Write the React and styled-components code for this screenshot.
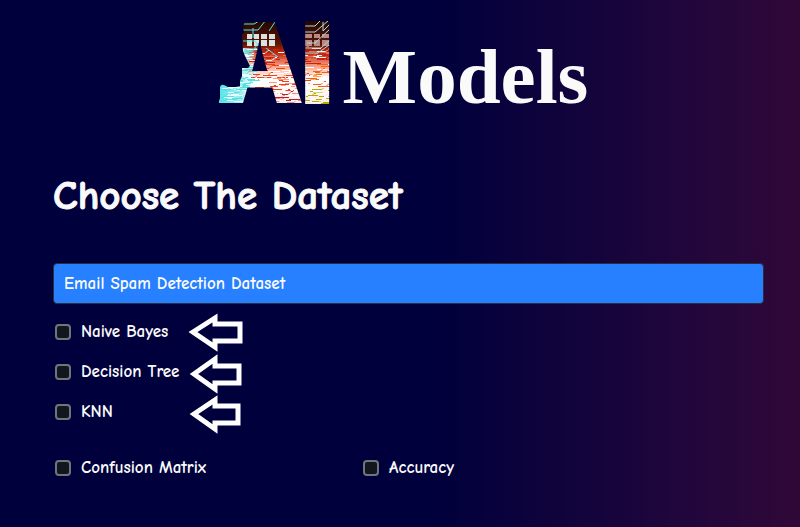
import React from "react";
import styled, { createGlobalStyle } from "styled-components";

const GlobalStyle = createGlobalStyle`
  * { box-sizing: border-box; }
  html { min-height: 100%; background: linear-gradient(90deg, #00003c 0%, #00003c 54%, #15043c 75%, #25073b 90%, #300838 100%); }
  body {
    margin: 0;
    color: #fafafa;
    font-family: "Comic Neue", "Comic Sans MS", "Open Sans", sans-serif;
    font-size: 17px;
    line-height: 24px;
  }
`;

const Page = styled.main`
  padding: 20px 36px 40px 53px;
`;

const Brand = styled.header`
  display: flex;
  justify-content: center;
  align-items: flex-start;
  gap: 8px;
  padding-right: 10px;
  height: 84px;
`;

const LogoArt = styled.svg`
  flex: none;
  width: 116px;
  height: 84px;
`;

const LogoLetters = styled.text`
  font-family: Inter, "Liberation Sans", sans-serif;
  font-size: 111px;
  font-weight: 900;
`;

const BrandName = styled.h1`
  margin: 13px 0 0;
  font: bold 79px/88px "Liberation Serif", "Times New Roman", serif;
`;

const Title = styled.h2`
  margin: 64px 0 40px;
  font-size: 41px;
  font-weight: 700;
  line-height: 55px;
  -webkit-text-stroke: 1px currentColor;
`;

const DatasetSelect = styled.select`
  display: block;
  appearance: none;
  width: 100%;
  height: 41px;
  padding: 0 10px;
  border: 1px solid #2b3038;
  border-radius: 4px;
  background: #2680ff;
  color: #fafafa;
  font: inherit;
  font-weight: 700;
`;

const Models = styled.fieldset`
  margin: 8px 0 0;
  padding: 0;
  border: 0;
`;

const Row = styled.div`
  display: flex;
  align-items: center;
  height: 40px;
`;

const Metrics = styled.fieldset`
  display: grid;
  grid-template-columns: 13fr 17fr;
  margin: 16px 0 0;
  padding: 0;
  border: 0;
`;

const Choice = styled.label`
  display: flex;
  align-items: center;
  gap: 10px;
  width: 136px;
  padding-left: 2px;
  font-weight: 700;
  white-space: nowrap;
`;

const Box = styled.input`
  appearance: none;
  flex: none;
  width: 16px;
  height: 16px;
  margin: 0;
  border: 2px solid #70757a;
  border-radius: 4px;
  background: #12171f;
  &:checked { background: #2680ff; }
`;

const Arrow = styled.svg`
  flex: none;
  width: 56px;
  height: 40px;
  overflow: visible;
`;

const arrows = {
  naive: "M4 20 L26 6 V12 H51 V29 H26 V35 Z",
  tree: "M5 22 L26 7 V14 H50 V31 H26 V37 Z",
  knn: "M5 22 L26 8 V14 H49 V31 H26 V37 Z",
};

function traceColor(x, y, pick) {
  if (x < 30) return pick < 0.5 ? "#55e0e6" : "#e4ffff";
  if (y < 44) return pick < 0.45 ? "#c9230c" : pick < 0.7 ? "#f2f6ff" : "#e07058";
  if (x > 84 && y > 66) return pick < 0.45 ? "#b5a800" : pick < 0.6 ? "#d4d860" : "#ffffff";
  if (x > 84) return pick < 0.35 ? "#f4601c" : pick < 0.5 ? "#ffa760" : "#ffffff";
  if (y > 72) return pick < 0.4 ? "#b02030" : pick < 0.6 ? "#e88a90" : "#ffffff";
  return pick < 0.35 ? "#e8421c" : pick < 0.5 ? "#ff9878" : "#ffffff";
}

// Repeatable pseudo-random traces for the circuit-board fill.
function circuitTraces(count) {
  let seed = 17;
  const next = () => {
    seed = (seed * 16807) % 2147483647;
    return seed / 2147483647;
  };
  return Array.from({ length: count }, (_, i) => {
    const x = Math.round(next() * 114);
    const y = 28 + Math.round(next() * 55);
    const w = 3 + Math.round(next() * 7);
    const bend = next() > 0.65 ? 3 : 0;
    return (
      <path
        key={i}
        d={`M${x} ${y + 0.5}h${w}l${bend} ${-bend}h2`}
        stroke={traceColor(x, y, next())}
      />
    );
  });
}

function Logo() {
  return (
    <LogoArt viewBox="0 0 116 84" role="img" aria-label="AI">
      <defs>
        <linearGradient id="heat" x1="0" y1="0" x2="0" y2="1">
          <stop offset="0" stopColor="#210600" />
          <stop offset="0.28" stopColor="#5a1505" />
          <stop offset="0.4" stopColor="#c72b10" />
          <stop offset="0.58" stopColor="#ffb79e" />
          <stop offset="0.7" stopColor="#ffffff" />
          <stop offset="1" stopColor="#ffe9e4" />
        </linearGradient>
        <linearGradient id="ice" x1="0" y1="0" x2="1" y2="0">
          <stop offset="0" stopColor="#58e4ea" />
          <stop offset="0.6" stopColor="#aceeee" />
          <stop offset="1" stopColor="#ffffff" stopOpacity="0" />
        </linearGradient>
        <mask id="letters" maskUnits="userSpaceOnUse" x="0" y="0" width="116" height="84">
          <LogoLetters x="-3" y="83" fill="#fff">A</LogoLetters>
          <LogoLetters x="82" y="83" fill="#fff" stroke="#fff" strokeWidth="2">I</LogoLetters>
          <path d="M0 0H23L25 13L23 14L24 31L26 36L31 46L29 48H23V56L21 61V67H0Z" fill="#000" />
          <path d="M1 83V67Q2 64 5 65Q11 69 16 67L23 66L19 83Z" fill="#fff" />
        </mask>
      </defs>
      <g mask="url(#letters)">
        <rect width="116" height="84" fill="url(#heat)" />
        <rect y="28" width="40" height="56" fill="url(#ice)" />
        <g fill="none" strokeWidth="1">{circuitTraces(420)}</g>
        <g fill="#d9e4e0">
          <path d="M28 14h5v5h-5zM35 14h5v5h-5zM42 14h6v5h-6zM50 14h6v5h-6zM28 20h5v6h-5zM35 20h5v6h-5zM42 20h6v6h-6zM50 20h6v6h-6z" />
          <path fill="#b98a85" d="M86 14h7v4h-7zM95 14h6v4h-6zM103 14h7v4h-7zM86 20h7v6h-7zM95 20h6v6h-6zM103 20h7v6h-7z" />
        </g>
        <g fill="none" stroke="#55e5eb" strokeWidth="1">
          <path d="M24 4h11l5-3M22 10h17l8-10M24 21h12l6 8M50 11l6-9M25 31h8l7-8M47 28l12 9M34 8v10" />
          <path stroke="#a9dce6" d="M85 6h11l5-5M86 12h10l13-11M88 23h8l15-14M87 28h15l10-9M86 33h13l11-8M104 2v9l7-7" />
        </g>
      </g>
    </LogoArt>
  );
}

function Check({ label }) {
  return (
    <Choice>
      <Box type="checkbox" />
      {label}
    </Choice>
  );
}

function ModelRow({ label, arrow }) {
  return (
    <Row>
      <Check label={label} />
      <Arrow viewBox="0 0 56 40" aria-hidden="true">
        <path d={arrow} fill="none" stroke="#fff" strokeWidth="5" strokeLinejoin="miter" />
      </Arrow>
    </Row>
  );
}

export default function App() {
  return (
    <>
      <GlobalStyle />
      <Page>
        <Brand>
          <Logo />
          <BrandName>Models</BrandName>
        </Brand>
        <Title id="dataset-title">Choose The Dataset</Title>
        <DatasetSelect aria-labelledby="dataset-title">
          <option>Email Spam Detection Dataset</option>
        </DatasetSelect>
        <Models aria-label="Models">
          <ModelRow label="Naive Bayes" arrow={arrows.naive} />
          <ModelRow label="Decision Tree" arrow={arrows.tree} />
          <ModelRow label="KNN" arrow={arrows.knn} />
        </Models>
        <Metrics aria-label="Metrics">
          <Row><Check label="Confusion Matrix" /></Row>
          <Row><Check label="Accuracy" /></Row>
        </Metrics>
      </Page>
    </>
  );
}
